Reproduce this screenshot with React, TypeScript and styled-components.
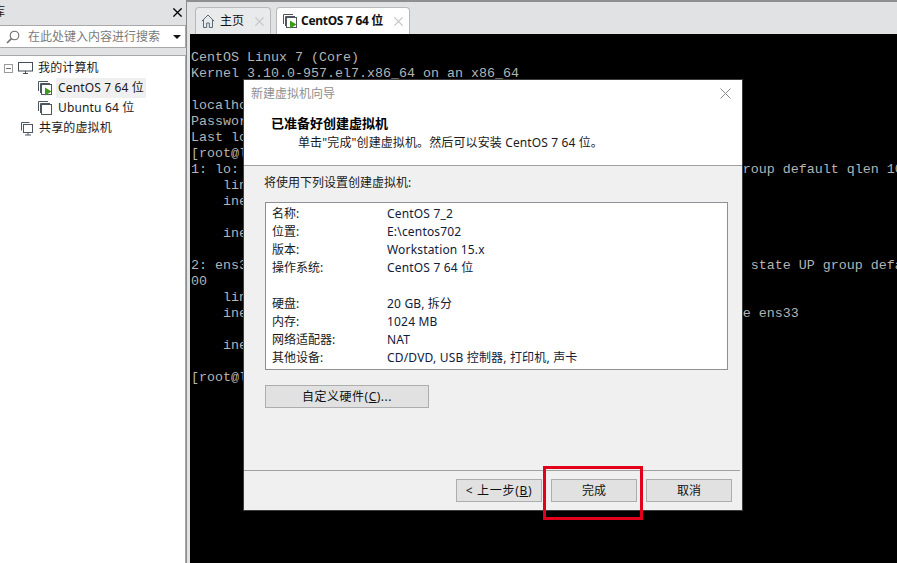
import React from "react";
import styled, { createGlobalStyle } from "styled-components";

const GlobalStyle = createGlobalStyle`
  html, body {
    margin: 0;
    padding: 0;
    width: 897px;
    height: 563px;
    overflow: hidden;
    background: #e1e2e4;
  }
  * { box-sizing: border-box; }
`;

const Page = styled.div`
  width: 897px;
  height: 563px;
  display: grid;
  grid-template-columns: 187px 1fr;
  font: 12px/16px "Noto Sans", "Noto Sans CJK SC", sans-serif;
  color: #1a1a1a;
  background: #e1e2e4;
  overflow: hidden;
`;

const Sidebar = styled.aside`
  display: flex;
  flex-direction: column;
  border-right: 1px solid #8c8c8c;
  min-height: 0;
`;

const SideHead = styled.div`
  height: 25px;
  padding: 3px 4px 0 0;
  display: flex;
  justify-content: space-between;
  align-items: flex-start;
  line-height: 18px;
  overflow: hidden;
`;

const SideClose = styled.span`
  display: flex;
  margin-top: 5px;
`;

const SideTitle = styled.span`
  margin-left: -7px;
  font-size: 12px;
`;

const SearchBox = styled.div`
  height: 23px;
  background: #fff;
  border: 1px solid #a8a8a8;
  border-left: 0;
  display: flex;
  align-items: center;
  padding: 0 4px 0 6px;
  gap: 8px;
  color: #7a7a7a;
`;

const SearchText = styled.span`
  flex: 1;
  white-space: nowrap;
  font-size: 12px;
`;

const Caret = styled.span`
  width: 0;
  height: 0;
  border-left: 4px solid transparent;
  border-right: 4px solid transparent;
  border-top: 4px solid #111;
`;

const Tree = styled.div`
  flex: 1;
  margin-top: 7px;
  background: #fff;
  border-top: 1px solid #a8a8a8;
  border-right: 1px solid #a8a8a8;
  padding-top: 2px;
`;

const TreeRow = styled.div<{ $indent: number }>`
  height: 20px;
  display: flex;
  align-items: center;
  padding-left: ${(p) => p.$indent}px;
  white-space: nowrap;
`;

const TreeLabel = styled.span<{ $selected?: boolean }>`
  margin-left: 3px;
  padding: 0 2px;
  line-height: 20px;
  letter-spacing: 0.15px;
  background: ${(p) => (p.$selected ? "#f0f0f0" : "transparent")};
`;

const Expander = styled.span`
  width: 9px;
  height: 9px;
  margin-right: 5px;
  border: 1px solid #9a9a9a;
  position: relative;
  &::after {
    content: "";
    position: absolute;
    left: 1px;
    right: 1px;
    top: 3px;
    height: 1px;
    background: #6a6a6a;
  }
`;

const Main = styled.main`
  display: flex;
  flex-direction: column;
  min-width: 0;
  padding-left: 3px;
`;

const TabBar = styled.div`
  height: 34px;
  flex: none;
  display: flex;
  align-items: flex-end;
  gap: 5px;
  padding-left: 8px;
  border-top: 2px solid #8f8f8f;
  margin-left: -3px;
`;

const Tab = styled.div<{ $active?: boolean }>`
  height: 27px;
  width: ${(p) => (p.$active ? 134 : 76)}px;
  display: flex;
  align-items: center;
  padding: 0 6px 0 5px;
  gap: ${(p) => (p.$active ? 3 : 5)}px;
  background: ${(p) => (p.$active ? "#fff" : "#e9eaec")};
  border: 1px solid #b9b9b9;
  border-bottom: 0;
  border-radius: 4px 4px 0 0;
  font-weight: ${(p) => (p.$active ? 700 : 400)};
  letter-spacing: ${(p) => (p.$active ? "-0.3px" : "0")};
  color: #111;
  white-space: nowrap;
`;

const TabClose = styled.span`
  margin-left: auto;
  display: flex;
`;

const Console = styled.div`
  position: relative;
  flex: 1;
  background: #000;
  overflow: hidden;
`;

const Terminal = styled.pre`
  margin: 0;
  padding: 16px 0 0 1px;
  font: 13.33px/16px "Liberation Mono", "DejaVu Sans Mono", monospace;
  color: #b4b4b4;
  white-space: pre;
`;

const Dialog = styled.section`
  position: absolute;
  left: 53px;
  top: 45px;
  width: 500px;
  height: 432px;
  background: #f0f0f0;
  border: 1px solid #3c3c3c;
  display: flex;
  flex-direction: column;
`;

const DialogTitle = styled.div`
  height: 27px;
  flex: none;
  background: #fff;
  display: flex;
  align-items: center;
  justify-content: space-between;
  padding: 0 11px 0 7px;
  color: #8f8f8f;
`;

const DialogHeader = styled.div`
  height: 59px;
  flex: none;
  background: #fff;
  border-bottom: 1px solid #a0a0a0;
  padding: 8px 0 0 27px;
`;

const HeaderTitle = styled.div`
  font-size: 13px;
  font-weight: 700;
  color: #000;
`;

const HeaderSub = styled.div`
  margin-top: 4px;
  padding-left: 27px;
  letter-spacing: 0.12px;
`;

const DialogBody = styled.div`
  flex: 1;
  padding: 9px 14px 0 20px;
  display: flex;
  flex-direction: column;
  align-items: flex-start;
`;

const SummaryBox = styled.div`
  width: 463px;
  height: 168px;
  margin: 11px 0 0 1px;
  background: #fff;
  border: 1px solid #8f9095;
  padding: 2px 0 0 6px;
`;

const SummaryRow = styled.div`
  height: 18px;
  display: grid;
  grid-template-columns: 115px 1fr;
  align-items: center;
  white-space: nowrap;
`;

const SummaryValue = styled.span`
  color: #10203a;
  letter-spacing: 0.18px;
`;

const Button = styled.button<{ $w: number; $spread?: number }>`
  width: ${(p) => p.$w}px;
  height: 23px;
  padding: 0;
  background: #e1e1e1;
  border: 1px solid #adadad;
  font: inherit;
  letter-spacing: ${(p) => p.$spread ?? 0}px;
  color: #111;
`;

const CustomButton = styled(Button)`
  margin: 15px 0 0 1px;
`;

const Footer = styled.div`
  height: 40px;
  flex: none;
  margin-right: 2px;
  border-top: 1px solid #a0a0a0;
  display: flex;
  justify-content: flex-end;
  gap: 9px;
  padding: 8px 8px 0 0;
`;

const Highlight = styled.div`
  position: absolute;
  left: 299px;
  top: 386px;
  width: 100px;
  height: 54px;
  border: 3px solid #e3001b;
  pointer-events: none;
`;

const Under = styled.span`
  text-decoration: underline;
`;

const CloseIcon = ({ size = 11, color = "#777", width = 1 }: { size?: number; color?: string; width?: number }) => (
  <svg width={size} height={size} viewBox="0 0 11 11" fill="none" stroke={color} strokeWidth={width}>
    <path d="M0.5 0.5l10 10M10.5 0.5l-10 10" />
  </svg>
);

const SearchIcon = () => (
  <svg width="14" height="14" viewBox="0 0 14 14" fill="none" stroke="#6e6e6e" strokeWidth="1.1">
    <circle cx="8.5" cy="5.5" r="4.3" />
    <path d="M5.4 8.6L1 13" strokeWidth="1.5" />
  </svg>
);

const MonitorIcon = () => (
  <svg width="15" height="12" viewBox="0 0 15 12" fill="none" stroke="#454d57">
    <rect x="0.5" y="0.5" width="14" height="8.5" />
    <path d="M5 11.5h5M7.5 9v2.5" />
  </svg>
);

const VmIcon = ({ running }: { running?: boolean }) => (
  <svg width="16" height="16" viewBox="0 0 16 16" fill="none" stroke="#4e5660">
    <path d="M1.5 11V1.5H11" />
    <path d="M3.5 13V3.5H13" />
    <rect x="4.5" y="4.5" width="10" height="10" fill="#fff" />
    {running && <path d="M8 7.5l6.5 4-6.5 4z" fill="#3f9a1b" stroke="none" />}
  </svg>
);

const SharedIcon = () => (
  <svg width="14" height="15" viewBox="0 0 14 15" fill="none" stroke="#4e5660">
    <path d="M1.5 9.5V1.5H9.5" />
    <rect x="3.5" y="3.5" width="9" height="8" fill="#fff" />
    <path d="M5 14h6M8 11.5V14" />
  </svg>
);

const HomeIcon = () => (
  <svg width="14" height="14" viewBox="0 0 14 14" fill="none" stroke="#5a6a78">
    <path d="M0.8 7.2L7 1l6.2 6.2" />
    <path d="M2.5 6v7.5h3.2V9h2.6v4.5h3.2V6" />
  </svg>
);

const consoleLines = [
  "CentOS Linux 7 (Core)",
  "Kernel 3.10.0-957.el7.x86_64 on an x86_64",
  "",
  "localhost login: root",
  "Password:",
  "Last login: Thu Jan 10 10:24:16 on tty1",
  "[root@localhost ~]# ip addr",
  "1: lo: <LOOPBACK,UP,LOWER_UP> mtu 65536 qdisc noqueue state UNKNOWN group default qlen 1000",
  "    link/loopback 00:00:00:00:00:00 brd 00:00:00:00:00:00",
  "    inet 127.0.0.1/8 scope host lo",
  "",
  "    inet6 ::1/128 scope host",
  "",
  "2: ens33: <BROADCAST,MULTICAST,UP,LOWER_UP> mtu 1500 qdisc pfifo_fast state UP group default qlen 10",
  "00",
  "    link/ether 00:0c:29:3a:5b:7c brd ff:ff:ff:ff:ff:ff",
  "    inet 192.168.1.128/24 brd 192.168.1.255 scope global noprefixroute ens33",
  "",
  "    inet6 fe80::20c:29ff:fe3a:5b7c/64 scope link",
  "",
  "[root@localhost ~]#",
];

const summary: [string, string][] = [
  ["名称:", "CentOS 7_2"],
  ["位置:", "E:\\centos702"],
  ["版本:", "Workstation 15.x"],
  ["操作系统:", "CentOS 7 64 位"],
  ["", ""],
  ["硬盘:", "20 GB, 拆分"],
  ["内存:", "1024 MB"],
  ["网络适配器:", "NAT"],
  ["其他设备:", "CD/DVD, USB 控制器, 打印机, 声卡"],
];

const App: React.FC = () => {
  return (
    <Page>
      <GlobalStyle />
      <Sidebar>
        <SideHead>
          <SideTitle>库</SideTitle>
          <SideClose>
            <CloseIcon size={9} color="#000" width={1.6} />
          </SideClose>
        </SideHead>
        <SearchBox>
          <SearchIcon />
          <SearchText>在此处键入内容进行搜索</SearchText>
          <Caret />
        </SearchBox>
        <Tree>
          <TreeRow $indent={4}>
            <Expander />
            <MonitorIcon />
            <TreeLabel>我的计算机</TreeLabel>
          </TreeRow>
          <TreeRow $indent={37}>
            <VmIcon running />
            <TreeLabel $selected>CentOS 7 64 位</TreeLabel>
          </TreeRow>
          <TreeRow $indent={37}>
            <VmIcon />
            <TreeLabel>Ubuntu 64 位</TreeLabel>
          </TreeRow>
          <TreeRow $indent={20}>
            <SharedIcon />
            <TreeLabel>共享的虚拟机</TreeLabel>
          </TreeRow>
        </Tree>
      </Sidebar>
      <Main>
        <TabBar>
          <Tab>
            <HomeIcon />
            <span>主页</span>
            <TabClose>
              <CloseIcon size={9} color="#c4c4c4" width={1.5} />
            </TabClose>
          </Tab>
          <Tab $active>
            <VmIcon running />
            <span>CentOS 7 64 位</span>
            <TabClose>
              <CloseIcon size={9} color="#c4c4c4" width={1.5} />
            </TabClose>
          </Tab>
        </TabBar>
        <Console>
          <Terminal>{consoleLines.join("\n")}</Terminal>
          <Dialog>
            <DialogTitle>
              <span>新建虚拟机向导</span>
              <CloseIcon size={11} color="#8a8a8a" />
            </DialogTitle>
            <DialogHeader>
              <HeaderTitle>已准备好创建虚拟机</HeaderTitle>
              <HeaderSub>单击"完成"创建虚拟机。然后可以安装 CentOS 7 64 位。</HeaderSub>
            </DialogHeader>
            <DialogBody>
              <span>将使用下列设置创建虚拟机:</span>
              <SummaryBox>
                {summary.map(([k, v], i) => (
                  <SummaryRow key={i}>
                    <span>{k}</span>
                    <SummaryValue>{v}</SummaryValue>
                  </SummaryRow>
                ))}
              </SummaryBox>
              <CustomButton $w={164} $spread={0.5}>
                自定义硬件(<Under>C</Under>)...
              </CustomButton>
            </DialogBody>
            <Footer>
              <Button $w={86} $spread={0.7}>
                &lt; 上一步(<Under>B</Under>)
              </Button>
              <Button $w={86}>完成</Button>
              <Button $w={86}>取消</Button>
            </Footer>
            <Highlight />
          </Dialog>
        </Console>
      </Main>
    </Page>
  );
};

export default App;
